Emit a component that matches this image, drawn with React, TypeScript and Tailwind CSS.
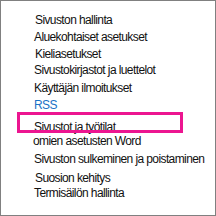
import React from 'react';

type Row = { label: string; cls: string; blue?: boolean };

const rows: Row[] = [
  { label: 'Sivuston hallinta', cls: 'h-[17px] pl-[1px]' },
  { label: 'Aluekohtaiset asetukset', cls: 'h-[17px]' },
  { label: 'Kieliasetukset', cls: 'h-[16px] pl-[1px]' },
  { label: 'Sivustokirjastot ja luettelot', cls: 'h-[18px]' },
  { label: 'Käyttäjän ilmoitukset', cls: 'h-[17px]' },
  { label: 'RSS', cls: 'h-[22px]', blue: true },
  { label: 'Sivustot ja työtilat', cls: 'h-[14px]' },
  { label: 'omien asetusten Word', cls: 'h-[18px] -ml-[1px]' },
  { label: 'Sivuston sulkeminen ja poistaminen', cls: 'h-[19px]' },
  { label: 'Suosion kehitys', cls: 'h-[15px] pl-[1px]' },
  { label: 'Termisäilön hallinta', cls: 'h-[17px]' },
];

export default function App() {
  return (
    <div
      className="relative w-[216px] h-[216px] bg-white border border-[#808080] overflow-hidden"
      style={{ fontFamily: '"Liberation Sans", Arial, sans-serif' }}
    >
      <ul className="flex flex-col pt-[13px] pl-[33px] text-[12px] leading-[12px] tracking-[-0.6px]">
        {rows.map((r) => (
          <li
            key={r.label}
            className={`${r.cls} whitespace-nowrap ${r.blue ? 'text-[#1a72c6]' : 'text-[#111]'}`}
          >
            {r.label}
          </li>
        ))}
      </ul>
      <div className="absolute left-[16px] top-[111px] w-[166px] h-[21px] border-[3px] border-[#ec1590]" />
    </div>
  );
}
